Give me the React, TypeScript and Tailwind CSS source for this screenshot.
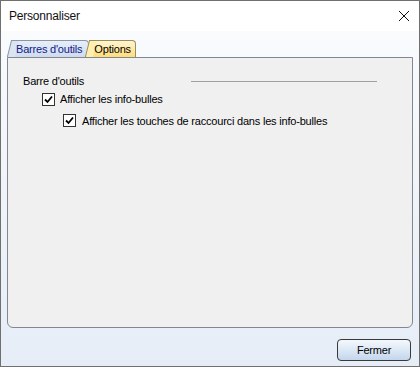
import { useState } from 'react';

const CheckBox = ({ checked, onToggle }: { checked: boolean; onToggle: () => void }) => (
  <button
    onClick={onToggle}
    className="w-[13px] h-[13px] shrink-0 border border-[#333] bg-white flex items-center justify-center p-0"
  >
    {checked && (
      <svg width="9" height="9" viewBox="0 0 9 9">
        <path d="M1 4.5 L3.5 7 L8 1.5" stroke="#000" strokeWidth="1.8" fill="none" />
      </svg>
    )}
  </button>
);

const App = () => {
  const [tab, setTab] = useState<'barres' | 'options'>('options');
  const [showTips, setShowTips] = useState(true);
  const [showKeys, setShowKeys] = useState(true);

  return (
    <div className="w-[420px] h-[367px] border border-[#707070] flex flex-col font-['Liberation_Sans',Arial,sans-serif] text-[11px] tracking-[-0.2px] text-black select-none">
      {/* Title bar */}
      <div className="h-[30px] shrink-0 bg-white flex items-center justify-between pl-[8px] pr-[9px]">
        <span className="text-[12px] text-[#111] tracking-[-0.2px]">Personnaliser</span>
        <svg width="12" height="12" viewBox="0 0 12 12">
          <path d="M1 1 L11 11 M11 1 L1 11" stroke="#111" strokeWidth="1" />
        </svg>
      </div>

      {/* Body */}
      <div className="flex-1 flex flex-col px-[6px] pt-[9px] pb-[5px] bg-gradient-to-b from-[#f9fbfd] to-[#e6edf7]">
        {/* Tabs */}
        <div className="h-[17px] flex items-end pl-[6px]">
          <button
            onClick={() => setTab('barres')}
            className={`relative h-[17px] pl-[3px] pr-[6px] border-t border-r border-[#8a96a6] rounded-tr-[4px] text-[11px] leading-[16px] text-[#10208a] before:content-[''] before:absolute before:top-[-1px] before:bottom-0 before:left-[-4px] before:w-[8px] before:-skew-x-[14deg] before:border-l before:border-t before:border-[#8a96a6] before:bg-[#dbe5f2] ${
              tab === 'barres' ? 'bg-gradient-to-b from-[#fff6cf] to-[#ffdc78] z-10' : 'bg-gradient-to-b from-[#e7eef8] to-[#cfdcee]'
            }`}
          >
            <span className="relative">Barres d'outils</span>
          </button>
          <button
            onClick={() => setTab('options')}
            className={`relative ml-[2px] h-[17px] pl-[3px] pr-[4px] border-t border-r border-[#9a8c60] rounded-tr-[4px] text-[11px] leading-[16px] text-black before:content-[''] before:absolute before:top-[-1px] before:bottom-0 before:left-[-4px] before:w-[8px] before:-skew-x-[14deg] before:border-l before:border-t before:border-[#9a8c60] before:bg-[#fff0b0] ${
              tab === 'options' ? 'bg-gradient-to-b from-[#fff6cf] to-[#ffdc78] z-10' : 'bg-gradient-to-b from-[#e7eef8] to-[#cfdcee]'
            }`}
          >
            <span className="relative">Options</span>
          </button>
        </div>

        {/* Panel */}
        <div className="h-[271px] border border-[#828790] rounded-b-[6px] bg-[#f0f0f0] pt-[16px] pl-[15px]">
          {tab === 'options' && (
            <div className="flex flex-col">
              <div className="flex items-center h-[14px]">
                <span className="w-[168px]">Barre d'outils</span>
                <div className="w-[186px] h-px bg-[#a0a0a0]" />
              </div>
              <div className="flex items-center gap-[5px] mt-[3px] ml-[19px]">
                <CheckBox checked={showTips} onToggle={() => setShowTips(!showTips)} />
                <span>Afficher les info-bulles</span>
              </div>
              <div className="flex items-center gap-[6px] mt-[5px] ml-[40px]">
                <CheckBox checked={showKeys} onToggle={() => setShowKeys(!showKeys)} />
                <span>Afficher les touches de raccourci dans les info-bulles</span>
              </div>
            </div>
          )}
        </div>

        {/* Footer */}
        <div className="flex-1 flex items-end justify-end pr-[2px]">
          <button className="w-[74px] h-[22px] border border-[#3a3a3a] rounded-[4px] bg-gradient-to-b from-[#f4f8fc] via-[#dce8f5] to-[#c3d6ec] text-[11px] text-black">
            Fermer
          </button>
        </div>
      </div>
    </div>
  );
};

export default App;
